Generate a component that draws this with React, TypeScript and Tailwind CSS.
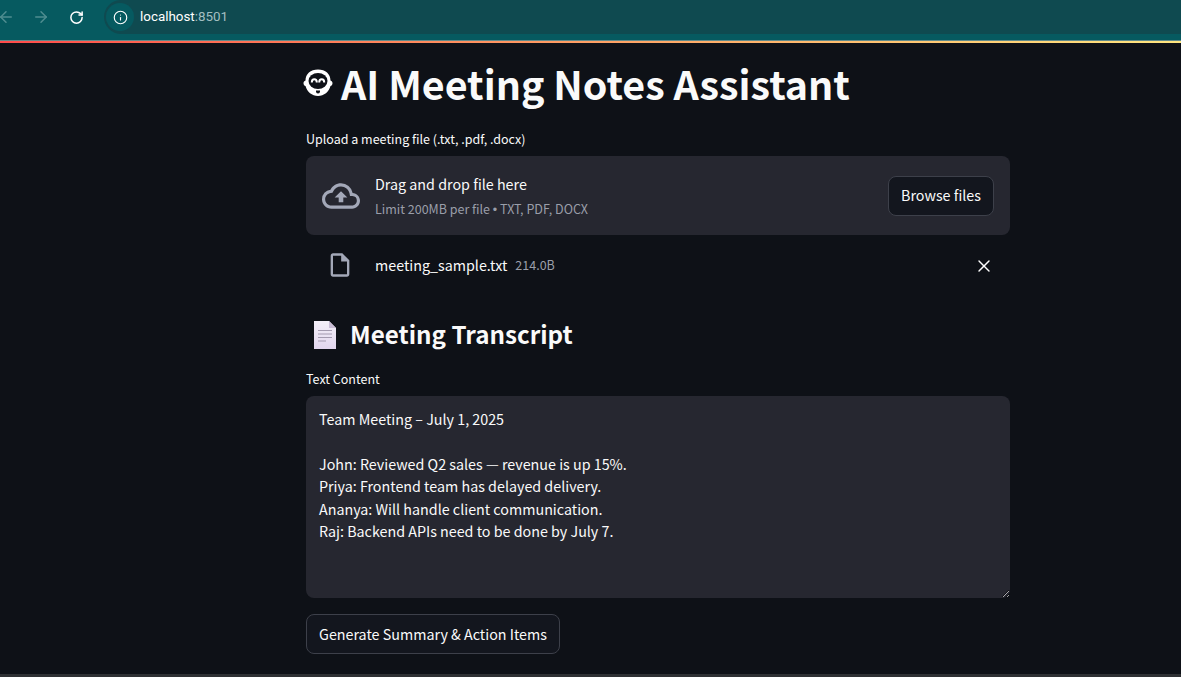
import React from 'react';
import { ArrowLeft, ArrowRight, RotateCw, Info, X } from 'lucide-react';

const BrowserBar = () => (
  <div className="shrink-0">
    <div className="h-[34px] flex items-center bg-[#065a60]">
      <div className="w-[104px] flex items-center">
        <ArrowLeft className="w-[18px] h-[18px] ml-[-3px] text-[#4f8d90]" strokeWidth={2} />
        <ArrowRight className="w-[18px] h-[18px] ml-[17px] text-[#4f8d90]" strokeWidth={2} />
        <RotateCw className="w-[15px] h-[15px] ml-[19px] text-white" strokeWidth={2.4} />
      </div>
      <div className="flex-1 h-[34px] bg-[#0f4a50] rounded-l-[17px] flex items-center pl-[2px]">
        <div className="w-[28px] h-[28px] rounded-full bg-[#065a60] flex items-center justify-center">
          <Info className="w-[15px] h-[15px] text-white" strokeWidth={1.8} />
        </div>
        <span className="ml-[6px] text-[13.4px] text-white font-['Roboto',sans-serif]">
          localhost<span className="text-[#a3bfc1]">:8501</span>
        </span>
      </div>
    </div>
    <div className="h-[6px] bg-[#065a60]" />
    <div className="h-px bg-[#5f8a8c]" />
    <div className="h-[2px] bg-gradient-to-r from-[#ff4b4b] to-[#ffe680]" />
  </div>
);

const RobotFace = () => (
  <svg viewBox="0 0 30 30" className="w-[30px] h-[30px]">
    <path d="M15 1.500c7.500 0 12.500 4.500 12.500 11 1.200.4 2 1.500 2 2.800s-.8 2.400-2 2.800C26 24 21 28 15 28S4 24 2.500 18.100C1.300 17.700.5 16.600.5 15.300s.8-2.400 2-2.800C2.500 6 7.500 1.500 15 1.500z" fill="#fff" />
    <ellipse cx="15" cy="13" rx="9.500" ry="8" fill="#0e1117" />
    <path d="M8.800 14.500c0-4.200 5-4.200 5 0M16.200 14.500c0-4.200 5-4.200 5 0" fill="none" stroke="#fff" strokeWidth="2" />
    <path d="M13 22.500h4v1a2 2 0 0 1-4 0z" fill="#0e1117" />
  </svg>
);

const PageEmoji = () => (
  <svg viewBox="0 0 24 28" className="w-[24px] h-[28px]">
    <defs>
      <linearGradient id="pageFill" x1="0" y1="0" x2="0" y2="1">
        <stop offset="0" stopColor="#f3eff8" />
        <stop offset="1" stopColor="#e2d6ee" />
      </linearGradient>
    </defs>
    <path d="M1 0h15l7 7v21H1z" fill="url(#pageFill)" />
    <path d="M16 0l7 7h-7z" fill="#c9bdd6" />
    <path d="M5 9.500h14M5 13h14M5 16.500h14M5 20h8" stroke="#a49bb0" strokeWidth="1" />
  </svg>
);

const CloudUpload = () => (
  <svg viewBox="0 0 24 24" className="w-[38px] h-[38px] text-[#a3a8b8]" fill="currentColor">
    <path d="M19.350 10.040A7.490 7.490 0 0 0 12 4C9.110 4 6.600 5.640 5.350 8.040A5.994 5.994 0 0 0 0 14c0 3.310 2.690 6 6 6h13c2.760 0 5-2.240 5-5 0-2.640-2.050-4.780-4.650-4.960zM19 18H6c-2.210 0-4-1.790-4-4 0-2.050 1.530-3.760 3.560-3.970l1.070-.11.500-.95A5.469 5.469 0 0 1 12 6c2.620 0 4.880 1.860 5.390 4.430l.300 1.500 1.530.110A2.980 2.980 0 0 1 22 15c0 1.650-1.350 3-3 3zM8 13h2.550v3h2.900v-3H16l-4-4z" />
  </svg>
);

const FileIcon = () => (
  <svg viewBox="0 0 24 24" className="w-[28px] h-[28px] text-[#a3a8b8]" fill="currentColor">
    <path d="M14 2H6c-1.100 0-2 .9-2 2v16c0 1.100.9 2 2 2h12c1.100 0 2-.9 2-2V8l-6-6zm4 18H6V4h7v5h5v11z" />
  </svg>
);

const transcript = `Team Meeting – July 1, 2025

John: Reviewed Q2 sales — revenue is up 15%.
Priya: Frontend team has delayed delivery.
Ananya: Will handle client communication.
Raj: Backend APIs need to be done by July 7.`;

export default function App() {
  return (
    <div className="w-[1181px] h-[677px] overflow-hidden flex flex-col bg-[#0e1117] text-[#fafafa] font-['Noto_Sans_CJK_SC','Noto_Sans',sans-serif]">
      <BrowserBar />

      <main className="flex-1 pl-[306px]">
        <div className="w-[704px]">
          <div className="h-[84px] flex items-center ml-[-3px] gap-[8px] pb-[4px]">
            <RobotFace />
            <h1 className="text-[39.4px] leading-none font-bold">AI Meeting Notes Assistant</h1>
          </div>

          <p className="h-[29px] text-[12.5px] leading-[24px]">Upload a meeting file (.txt, .pdf, .docx)</p>

          <section className="h-[79px] rounded-lg bg-[#262730] flex items-center pl-4 pr-4">
            <CloudUpload />
            <div className="ml-[15px] flex-1 pt-[2px]">
              <div className="text-[14.3px] leading-[26px]">Drag and drop file here</div>
              <div className="text-[12.5px] leading-[24px] text-[#9a9ea9]">
                Limit 200MB per file <span className="font-['Liberation_Sans',sans-serif]">•</span> TXT, PDF, DOCX
              </div>
            </div>
            <button className="h-[40px] w-[106px] rounded-lg border border-[#3d404a] bg-[#13161e] text-[14.3px] pb-[2px]">
              Browse files
            </button>
          </section>

          <div className="h-[62px] flex items-center pb-[3px]">
            <div className="w-[69px] flex justify-center pr-[1px]">
              <FileIcon />
            </div>
            <span className="text-[14.3px]">meeting_sample.txt</span>
            <span className="ml-2 text-[12.5px] text-[#9a9ea9] mt-[1px]">214.0B</span>
            <X className="w-[20px] h-[20px] ml-auto mr-[16px] mt-[3px] text-white" strokeWidth={1.7} />
          </div>

          <div className="h-[70px] flex items-center pl-[7px] gap-[13px] pt-[5px]">
            <PageEmoji />
            <h2 className="text-[24.2px] leading-none font-bold">Meeting Transcript</h2>
          </div>

          <label className="block h-[29px] text-[12.5px] leading-[24px]">Text Content</label>

          <textarea
            readOnly
            value={transcript}
            className="block w-full h-[202px] rounded-lg bg-[#262730] px-[13px] pt-[12px] pb-[13px] text-[14.3px] leading-[22.4px] outline-none resize-y"
          />

          <button className="mt-[16px] h-[40px] w-[254px] rounded-lg border border-[#3d404a] bg-[#13161e] text-[14.3px]">
            Generate Summary &amp; Action Items
          </button>
        </div>
      </main>

      <div className="h-[3px] shrink-0 bg-[#2e3033]" />
    </div>
  );
}
